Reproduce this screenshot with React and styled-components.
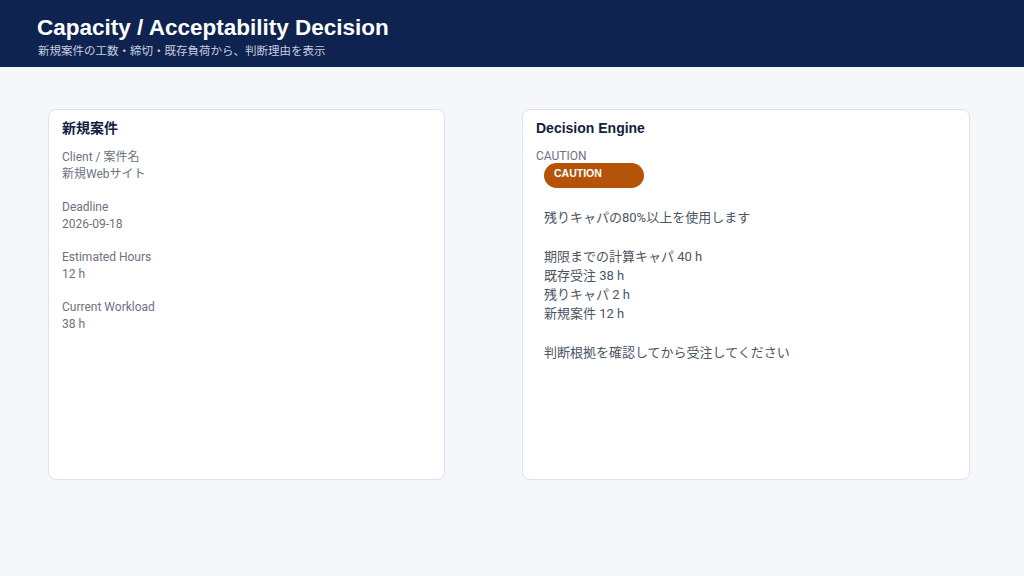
import React from "react";
import styled, { createGlobalStyle } from "styled-components";

const GlobalStyle = createGlobalStyle`
  * { box-sizing: border-box; }
  body {
    margin: 0;
    background: #f5f7fb;
    font-family: Roboto, "Noto Sans CJK JP", sans-serif;
  }
`;

const headingFont = `"Liberation Sans", Arial, "Noto Sans CJK JP", sans-serif`;

const Header = styled.header`
  background: #0f2350;
  color: #fff;
  height: 67px;
  padding: 13px 37px 0;
`;

const Title = styled.h1`
  margin: 0;
  font-family: ${headingFont};
  font-size: 22.5px;
  line-height: 30px;
  font-weight: 700;
`;

const Subtitle = styled.p`
  margin: 0 0 0 1px;
  font-size: 11.5px;
  line-height: 16px;
  color: #c5cde0;
`;

const Main = styled.main`
  display: grid;
  grid-template-columns: 397px 448px;
  gap: 77px;
  padding: 42px 48px;
`;

const Card = styled.section`
  background: #fff;
  border: 1px solid #dde2ec;
  border-radius: 8px;
  height: 371px;
  padding: 9px 13px;
`;

const CardTitle = styled.h2`
  margin: 0 0 11px;
  font-family: ${headingFont};
  font-size: 14px;
  line-height: 19px;
  font-weight: 700;
  color: #14213d;
`;

const Field = styled.div`
  margin-bottom: 17px;
  font-size: 12px;
  line-height: 16.5px;
  color: #6b7280;
`;

const Label = styled.div``;
const Value = styled.div`
  color: #6b7280;
`;

const StatusLabel = styled.div`
  font-size: 12px;
  line-height: 14px;
  color: #6b7280;
`;

const Body = styled.div`
  padding-left: 8px;
`;

const Badge = styled.span`
  display: inline-block;
  width: 100px;
  height: 25px;
  border-radius: 13px;
  background: ${(p) => p.color};
  color: #fff;
  font-family: ${headingFont};
  font-size: 10.5px;
  font-weight: 700;
  line-height: 20px;
  padding: 0 10px;
  vertical-align: top;
`;

const Reason = styled.p`
  margin: 20px 0 0;
  font-size: 13px;
  line-height: 19.25px;
  color: #4b5563;
  white-space: pre-line;
`;

const fields = [
  ["Client / 案件名", "新規Webサイト"],
  ["Deadline", "2026-09-18"],
  ["Estimated Hours", "12 h"],
  ["Current Workload", "38 h"],
];

const reason = `残りキャパの80%以上を使用します

期限までの計算キャパ 40 h
既存受注 38 h
残りキャパ 2 h
新規案件 12 h

判断根拠を確認してから受注してください`;

export default function App() {
  return (
    <>
      <GlobalStyle />
      <Header>
        <Title>Capacity / Acceptability Decision</Title>
        <Subtitle>新規案件の工数・締切・既存負荷から、判断理由を表示</Subtitle>
      </Header>
      <Main>
        <Card>
          <CardTitle>新規案件</CardTitle>
          {fields.map(([label, value]) => (
            <Field key={label}>
              <Label>{label}</Label>
              <Value>{value}</Value>
            </Field>
          ))}
        </Card>
        <Card>
          <CardTitle>Decision Engine</CardTitle>
          <StatusLabel>CAUTION</StatusLabel>
          <Body>
            <Badge color="#b45309">CAUTION</Badge>
            <Reason>{reason}</Reason>
          </Body>
        </Card>
      </Main>
    </>
  );
}
